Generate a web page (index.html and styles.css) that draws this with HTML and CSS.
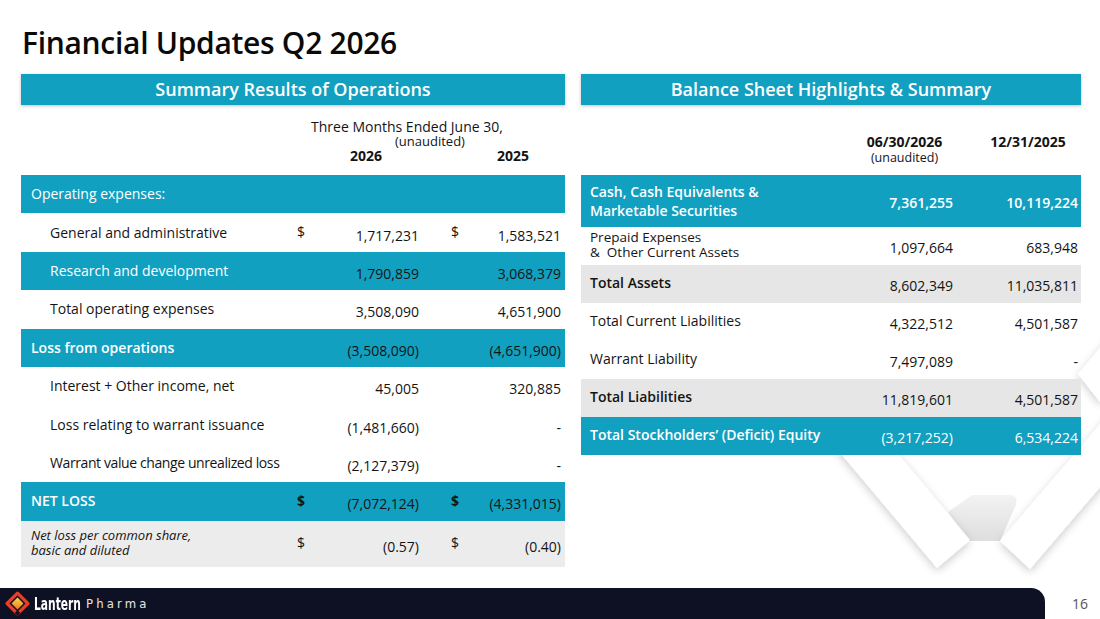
FILE: index.html
```html
<!DOCTYPE html>
<html lang="en">
<head>
<meta charset="utf-8">
<title>Financial Updates Q2 2026</title>
<link rel="stylesheet" href="styles.css">
</head>
<body>
<div class="slide">
  <svg class="deco" viewBox="0 0 1100 619" aria-hidden="true">
    <defs>
      <filter id="sh" x="-30%" y="-30%" width="160%" height="160%">
        <feDropShadow dx="0" dy="3" stdDeviation="4" flood-color="#000" flood-opacity="0.2"/>
      </filter>
      <linearGradient id="jg" x1="0" y1="0" x2="0" y2="1">
        <stop offset="0" stop-color="#f3f3f3"/>
        <stop offset="1" stop-color="#dedede"/>
      </linearGradient>
    </defs>
    <polygon points="1078,374 1140,300 1170,330 1100,402" fill="#fff" filter="url(#sh)"/>
    <path d="M948 512 L972 495 L1009 495 Q1020 495 1015 507 L1000 541 L968 541 Z" fill="url(#jg)"/>
    <polygon points="1000,541 1030,569 1190,382 1160,354" fill="#fff" filter="url(#sh)"/>
    <polygon points="796,400 853,400 970,540 937,568" fill="#fff" filter="url(#sh)"/>
  </svg>

  <h1 class="title">Financial Updates Q2 2026</h1>

  <div class="panels">
    <section class="panel ops">
      <div class="bar">Summary Results of Operations</div>
      <div class="ops-head">
        <div class="period">Three Months Ended June 30,</div>
        <div class="unaud">(unaudited)</div>
        <div class="years"><span>2026</span><span>2025</span></div>
      </div>
      <div class="otable">
        <div class="orow teal"><div class="lbl top med">Operating expenses:</div></div>
        <div class="orow"><div class="lbl ind">General and administrative</div><div class="cur">$</div><div class="val">1,717,231</div><div class="cur c2">$</div><div class="val">1,583,521</div></div>
        <div class="orow teal"><div class="lbl ind wt">Research and development</div><div class="cur"></div><div class="val">1,790,859</div><div class="cur c2"></div><div class="val">3,068,379</div></div>
        <div class="orow"><div class="lbl ind">Total operating expenses</div><div class="cur"></div><div class="val">3,508,090</div><div class="cur c2"></div><div class="val">4,651,900</div></div>
        <div class="orow teal"><div class="lbl top semi">Loss from operations</div><div class="cur"></div><div class="val">(3,508,090)</div><div class="cur c2"></div><div class="val">(4,651,900)</div></div>
        <div class="orow"><div class="lbl ind">Interest + Other income, net</div><div class="cur"></div><div class="val">45,005</div><div class="cur c2"></div><div class="val">320,885</div></div>
        <div class="orow"><div class="lbl ind">Loss relating to warrant issuance</div><div class="cur"></div><div class="val">(1,481,660)</div><div class="cur c2"></div><div class="val">-</div></div>
        <div class="orow"><div class="lbl ind tight">Warrant value change unrealized loss</div><div class="cur"></div><div class="val">(2,127,379)</div><div class="cur c2"></div><div class="val">-</div></div>
        <div class="orow teal"><div class="lbl top semi">NET LOSS</div><div class="cur b">$</div><div class="val">(7,072,124)</div><div class="cur c2 b">$</div><div class="val">(4,331,015)</div></div>
        <div class="orow grey tall"><div class="lbl top ital"><span class="ln">Net loss per common share,</span><span class="ln">basic and diluted</span></div><div class="cur">$</div><div class="val">(0.57)</div><div class="cur c2">$</div><div class="val">(0.40)</div></div>
      </div>
    </section>

    <section class="panel bs">
      <div class="bar">Balance Sheet Highlights &amp; Summary</div>
      <div class="bs-head">
        <div class="bs-lbl"></div>
        <div class="bs-c1"><div class="date">06/30/2026</div><div class="unaud2">(unaudited)</div></div>
        <div class="bs-c2"><div class="date">12/31/2025</div></div>
      </div>
      <div class="btable">
        <div class="brow teal cash"><div class="blbl semi wt"><span class="ln">Cash, Cash Equivalents &amp;</span><span class="ln">Marketable Securities</span></div><div class="bval semi wt">7,361,255</div><div class="bval semi wt">10,119,224</div></div>
        <div class="brow two"><div class="blbl"><span class="ln">Prepaid Expenses</span><span class="ln">&amp;&nbsp; Other Current Assets</span></div><div class="bval">1,097,664</div><div class="bval">683,948</div></div>
        <div class="brow grey2"><div class="blbl semi">Total Assets</div><div class="bval">8,602,349</div><div class="bval">11,035,811</div></div>
        <div class="brow"><div class="blbl">Total Current Liabilities</div><div class="bval">4,322,512</div><div class="bval">4,501,587</div></div>
        <div class="brow"><div class="blbl">Warrant Liability</div><div class="bval">7,497,089</div><div class="bval">-</div></div>
        <div class="brow grey2"><div class="blbl semi">Total Liabilities</div><div class="bval">11,819,601</div><div class="bval">4,501,587</div></div>
        <div class="brow teal"><div class="blbl semi wt">Total Stockholders’ (Deficit) Equity</div><div class="bval wt">(3,217,252)</div><div class="bval wt">6,534,224</div></div>
      </div>
    </section>
  </div>

  <footer class="footer">
    <div class="brandbar">
      <svg class="mark" viewBox="0 0 26 26" width="25" height="25" aria-hidden="true">
        <defs>
          <linearGradient id="lg" x1="0" y1="0" x2="0" y2="1">
            <stop offset="0" stop-color="#ffd54a"/>
            <stop offset="1" stop-color="#f07a1a"/>
          </linearGradient>
        </defs>
        <path d="M13 2.2 L23.8 13 L13 23.8 L2.2 13 Z" fill="none" stroke="#e3402b" stroke-width="3.4" stroke-linejoin="round"/>
        <path d="M13 6.8 L19.2 13 L13 19.2 L6.8 13 Z" fill="url(#lg)"/>
        <path d="M10.2 22.6 L13 20 L15.8 22.6 L13 26 Z" fill="#0e1124"/>
      </svg>
      <span class="lantern">Lantern</span><span class="pharma">Pharma</span>
    </div>
    <div class="pageno">16</div>
  </footer>
</div>
</body>
</html>
```

FILE: styles.css
```css
* { box-sizing: border-box; margin: 0; padding: 0; }
html, body { width: 1100px; height: 619px; overflow: hidden; background: #fff; }
body { font-family: "Open Sans", "Liberation Sans", sans-serif; color: #141414; }

.slide { position: relative; width: 1100px; height: 619px; display: flex; flex-direction: column; }
.deco { position: absolute; left: 0; top: 0; width: 1100px; height: 619px; z-index: 0; pointer-events: none; }

.title {
  position: relative; z-index: 1;
  font-size: 30px; font-weight: 600; line-height: 30px;
  padding: 28px 0 0 22px; letter-spacing: -0.3px; color: #0a0a0a;
}

.panels { position: relative; z-index: 1; display: flex; gap: 16px; padding-left: 21px; margin-top: 16px; }
.ops { width: 544px; }
.bs { width: 500px; }

.bar {
  height: 31px; line-height: 31px; background: #12a0c1; color: #fff;
  font-size: 18px; font-weight: 600; text-align: center;
  box-shadow: 0 1px 3px rgba(0,0,0,0.25);
}

.teal { background: #12a0c1; }
.grey { background: #ececec; }
.grey2 { background: #e6e6e6; }
.ln { display: block; }

/* ---- left table ---- */
.ops-head { height: 70px; padding-top: 14px; font-size: 14px; }
.period { line-height: 15px; padding-left: 290px; }
.unaud { font-size: 13px; line-height: 15px; padding-left: 374px; }
.years { display: flex; gap: 115px; padding-left: 329px; font-weight: 700; line-height: 15px; margin-top: -1px; }

.orow {
  display: grid; grid-template-columns: 276px 30px 94px 40px 104px;
  height: 38.4px; align-items: center; font-size: 14px;
}
.orow.tall { height: 46px; }
.lbl { white-space: nowrap; padding-bottom: 1px; }
.lbl.ind { padding-left: 29px; }
.lbl.top { padding-left: 10px; color: #fff; }
.orow.grey .lbl.top { color: #141414; }
.lbl.med { font-weight: 500; }
.lbl.semi { font-weight: 600; }
.lbl.wt { color: #fff; }
.lbl.tight { letter-spacing: -0.4px; }
.lbl.ital { font-style: italic; font-size: 13px; line-height: 15px; padding-bottom: 2px; }
.cur { padding-bottom: 2px; }
.cur.c2 { padding-left: 30px; }
.cur.b { font-weight: 700; }
.val { text-align: right; padding-top: 5px; padding-right: 2px; white-space: nowrap; }
.orow .val:last-child { padding-right: 4px; }

/* ---- right table ---- */
.bs-head { height: 70px; display: grid; grid-template-columns: 260px 115px 125px; padding-top: 29px; }
.date { font-size: 14px; font-weight: 700; line-height: 15px; }
.unaud2 { font-size: 12.5px; line-height: 15px; margin-top: 1px; }
.bs-c1 { text-align: center; padding-left: 12px; }
.bs-c2 { text-align: center; padding-left: 19px; }

.brow {
  display: grid; grid-template-columns: 260px 115px 125px;
  height: 38px; align-items: center; font-size: 14px;
}
.brow.cash { height: 52px; }
.blbl { padding-left: 9px; white-space: nowrap; padding-bottom: 3px; }
.cash .blbl { line-height: 19px; padding-bottom: 0; }
.two .blbl { font-size: 13.5px; line-height: 15px; padding-bottom: 2px; }
.bval { text-align: right; padding-right: 3px; padding-top: 2px; }
.semi { font-weight: 600; }
.wt { color: #fff; }

/* ---- footer ---- */
.footer { margin-top: auto; display: flex; align-items: center; height: 31px; position: relative; z-index: 1; }
.brandbar {
  width: 1045px; height: 31px; background: #0e1124;
  border-top-right-radius: 14px;
  display: flex; align-items: center; padding-left: 5px;
}
.mark { display: block; }
.lantern {
  display: inline-block;
  font-family: "Liberation Sans Narrow", "DejaVu Sans Condensed", sans-serif;
  font-weight: 700; font-size: 18px; color: #fff; margin-left: 4px;
  transform: scaleX(0.66); transform-origin: 0 50%;
  margin-right: -20px;
}
.pharma {
  font-family: "Liberation Sans Narrow", "DejaVu Sans Condensed", sans-serif;
  font-size: 13px; color: #e4e4e4; letter-spacing: 3.1px; margin-left: 1px;
}
.pageno { font-size: 14px; color: #555; margin-left: 27px; }
```
